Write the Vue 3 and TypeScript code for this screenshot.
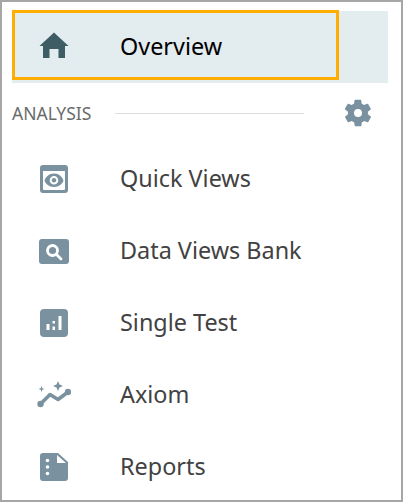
<template>
  <div class="frame">
    <nav class="menu">
      <div class="row active">
        <div class="focus">
          <span class="icon">
            <svg width="30" height="26" viewBox="0 0 30 26"><path d="M15 0.5 L29.5 14 H26 V26 H19.500 V17 H10.500 V26 H4 V14 H0.5 Z" fill="#3d5c63" /></svg>
          </span>
          <span class="label">Overview</span>
        </div>
      </div>
      <div class="section">
        <span class="section-title">ANALYSIS</span>
        <span class="rule"></span>
        <svg class="gear" width="32" height="32" viewBox="0 0 24 24"><path fill="#7a929f" d="M19.4 13a7.6 7.6 0 0 0 0-2l2.1-1.6a.5.5 0 0 0 .1-.64l-2-3.46a.5.5 0 0 0-.6-.22l-2.5 1a7.3 7.3 0 0 0-1.7-1l-.4-2.65A.5.5 0 0 0 13.9 2h-4a.5.5 0 0 0-.5.43L9 5.08a7.7 7.7 0 0 0-1.7 1l-2.5-1a.5.5 0 0 0-.6.22l-2 3.46a.5.5 0 0 0 .1.64L4.5 11a7.9 7.9 0 0 0 0 2l-2.1 1.6a.5.5 0 0 0-.1.64l2 3.46c.13.22.39.3.6.22l2.5-1c.52.4 1.08.74 1.7 1l.4 2.65c.03.24.25.43.5.43h4c.25 0 .47-.19.5-.43l.4-2.65a7.7 7.7 0 0 0 1.7-1l2.5 1c.23.08.47 0 .6-.22l2-3.46a.5.5 0 0 0-.1-.64zM12 15a3 3 0 1 1 0-6 3 3 0 0 1 0 6z" /></svg>
      </div>
      <div v-for="item in items" :key="item.name" class="row">
        <span class="icon">
          <svg v-if="item.name === 'Quick Views'" width="28" height="28" viewBox="0 0 28 28">
            <path fill="#7a929f" fill-rule="evenodd" d="M3 0 H25 A3 3 0 0 1 28 3 V25 A3 3 0 0 1 25 28 H3 A3 3 0 0 1 0 25 V3 A3 3 0 0 1 3 0 Z M3 6 V24 A1 1 0 0 0 4 25 H24 A1 1 0 0 0 25 24 V6 Z" />
            <path fill="#7a929f" fill-rule="evenodd" d="M14 8.5 C19 8.5 22.5 12 23.5 15.5 C22.5 19 19 22 14 22 C9 22 5.5 19 4.500 15.500 C5.500 12 9 8.500 14 8.500 Z M14 11 A4.300 4.300 0 1 0 14 19.600 A4.300 4.300 0 1 0 14 11 Z" />
            <circle cx="14" cy="15.300" r="2.200" fill="#7a929f" />
          </svg>
          <svg v-else-if="item.name === 'Data Views Bank'" width="30" height="25" viewBox="0 0 30 25">
            <rect width="30" height="25" rx="3" fill="#7a929f" />
            <circle cx="13.500" cy="11.500" r="5" fill="none" stroke="#fff" stroke-width="2.800" />
            <path d="M17.500 15.500 L22 20" stroke="#fff" stroke-width="2.800" stroke-linecap="round" />
          </svg>
          <svg v-else-if="item.name === 'Single Test'" width="28" height="28" viewBox="0 0 28 28">
            <rect width="28" height="28" rx="4" fill="#7a929f" />
            <path fill="#fff" d="M6.500 15 H9.500 V21 H6.500 Z M12.500 12 H15 V14.500 H12.500 Z M12.500 17.500 H15 V21 H12.500 Z M18.500 7 H21.500 V21 H18.500 Z" />
          </svg>
          <svg v-else-if="item.name === 'Axiom'" width="34" height="28" viewBox="0 0 34 28">
            <path d="M3.500 23 L13 13.500 L21 18.500 L31 11" fill="none" stroke="#7a929f" stroke-width="3.600" stroke-linejoin="round" stroke-linecap="round" />
            <circle cx="3.500" cy="23" r="3.200" fill="#7a929f" />
            <circle cx="31" cy="11" r="3.200" fill="#7a929f" />
            <path fill="#7a929f" d="M21 0 L22.500 3.500 L26 5 L22.500 6.500 L21 10 L19.500 6.500 L16 5 L19.500 3.500 Z M4.500 5 L5.300 7.200 L7.500 8 L5.300 8.800 L4.500 11 L3.700 8.800 L1.500 8 L3.700 7.200 Z" />
          </svg>
          <svg v-else width="28" height="28" viewBox="0 0 28 28">
            <path fill="#7a929f" d="M3 0 H18 L28 9 V25 A3 3 0 0 1 25 28 H3 A3 3 0 0 1 0 25 V3 A3 3 0 0 1 3 0 Z" />
            <path fill="#fff" d="M17 2 L26 10 H17 Z" />
            <circle cx="7.500" cy="7.500" r="1.800" fill="#fff" />
            <circle cx="7.500" cy="14" r="1.800" fill="#fff" />
            <circle cx="7.500" cy="20.500" r="1.800" fill="#fff" />
          </svg>
        </span>
        <span class="label">{{ item.name }}</span>
      </div>
    </nav>
  </div>
</template>

<script setup lang="ts">
const items: { name: string }[] = [
  { name: "Quick Views" },
  { name: "Data Views Bank" },
  { name: "Single Test" },
  { name: "Axiom" },
  { name: "Reports" },
];
</script>

<style>
html,
body {
  margin: 0;
  background: #fff;
}
</style>

<style scoped>
.frame {
  box-sizing: border-box;
  width: 403px;
  height: 502px;
  border: 2px solid #a6a6a6;
  padding: 9px 13px 0 10px;
  overflow: hidden;
  font-family: "Noto Sans", "Open Sans", sans-serif;
  color: #424242;
}
.menu {
  display: flex;
  flex-direction: column;
}
.row {
  height: 72px;
  display: flex;
  align-items: center;
}
.row.active {
  background: #e3ecef;
  align-items: flex-start;
  color: #000;
}
.focus {
  box-sizing: border-box;
  width: 327px;
  height: 70px;
  margin-top: -1px;
  border: 3px solid #ffad00;
  display: flex;
  align-items: center;
}
.focus .icon {
  margin-left: -3px;
}
.icon {
  width: 84px;
  display: flex;
  justify-content: center;
  flex-shrink: 0;
}
.label {
  margin-left: 24px;
  margin-top: -2px;
  font-size: 23.4px;
  line-height: 30px;
}
.focus .label {
  margin-top: 1px;
}
.section {
  height: 60px;
  display: flex;
  align-items: center;
}
.section-title {
  font-size: 17.5px;
  color: #6b6b6b;
  width: 103px;
  flex-shrink: 0;
  white-space: nowrap;
  margin-top: -1px;
}
.rule {
  width: 189px;
  height: 1px;
  background: #dedede;
}
.gear {
  margin-left: 38px;
}
</style>
